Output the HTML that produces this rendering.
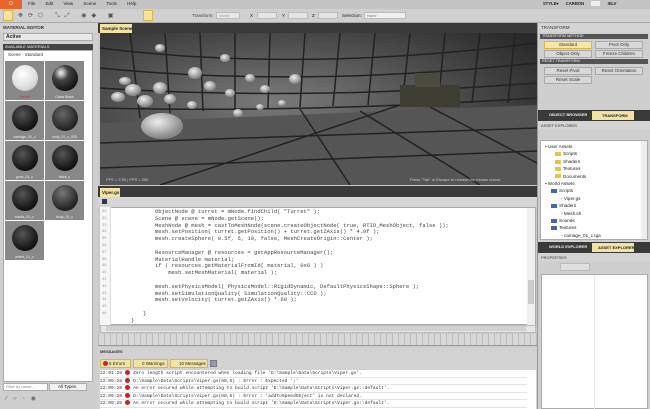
<!DOCTYPE html>
<html><head><style>
*{margin:0;padding:0;box-sizing:border-box}
body{width:650px;height:409px;overflow:hidden;background:#c9c9c9;font-family:"Liberation Sans",sans-serif;font-size:5px;color:#222;position:relative}
.a{position:absolute;white-space:nowrap}
.hdr{background:#d4d4d4;color:#333;font-size:4.5px;font-weight:bold;padding:2px 3px}
.dark{background:#3a3a3a}
.code{font-family:"Liberation Mono",monospace;font-size:5.5px;line-height:6.8px;white-space:pre;color:#444}
.btn{position:absolute;background:#d8d8d8;border:1px solid #aaa;font-size:4.5px;text-align:center;line-height:6px;color:#333;white-space:nowrap}
.th{position:absolute;width:39px;height:39px;background:#888;}
.th i{position:absolute;left:7px;top:4px;width:26px;height:26px;border-radius:50%;background:radial-gradient(circle at 40% 35%,#555,#111 70%)}
.th b{position:absolute;bottom:1px;left:0;right:0;font-size:3.5px;color:#eee;text-align:center;font-weight:normal}
.msg{position:absolute;left:100px;width:427px;height:7.5px;font-family:"Liberation Mono",monospace;font-size:4.6px;line-height:7.5px;white-space:pre;color:#333;border-bottom:1px solid #e4e4e4;overflow:hidden}
.msg span{display:inline-block;width:5px;height:5px;border-radius:50%;background:#c22;vertical-align:middle;margin:0 3px}
.tree{position:absolute;font-size:4.6px;color:#222}
.tree i{display:inline-block;width:6px;height:4px;background:#e8c24a;margin-right:2px;vertical-align:middle}
</style></head><body>
<div class="a" style="left:0;top:0;width:650px;height:9px;background:#c4c4c4"></div>
<div class="a" style="left:0;top:0;width:22px;height:9px;background:#e8652a;color:#fff;text-align:center;font-size:5px;line-height:9px">O</div>
<div class="a" style="left:28px;top:1px;font-size:4.5px;word-spacing:9px">File Edit View Scene Tools Help</div>
<div class="a" style="left:543px;top:1px;font-size:4.2px;font-weight:bold;word-spacing:6px">STYLE▾ CARBON <span style="background:#eee;color:#eee">SILV</span> SILV</div>
<div class="a" style="left:0;top:9px;width:650px;height:14px;background:#d0d0d0;border-bottom:1px solid #aaa"></div>
<div class="a" style="left:3px;top:10px;width:10px;height:11px;background:#f3e3a0;border:1px solid #d9b74c"></div>
<div class="a" style="left:143px;top:10px;width:10px;height:11px;background:#f3e3a0;border:1px solid #d9b74c"></div>
<div class="a" style="left:18px;top:12px;width:120px;height:7px;color:#555;font-size:6px;letter-spacing:5px">✥⟳⬡ ⤡⤢ ◉◆ ▣</div>
<div class="a" style="left:192px;top:13px;font-size:4.5px;color:#444">Transform:</div>
<div class="a" style="left:216px;top:12px;width:24px;height:7px;background:#e8e8e8;border:1px solid #bbb;font-size:4px;color:#999;padding-left:2px">World</div>
<div class="a" style="left:250px;top:13px;font-size:4.5px">X</div><div class="a" style="left:257px;top:12px;width:20px;height:7px;background:#e4e4e4;border:1px solid #bbb"></div>
<div class="a" style="left:282px;top:13px;font-size:4.5px">Y</div><div class="a" style="left:288px;top:12px;width:20px;height:7px;background:#e4e4e4;border:1px solid #bbb"></div>
<div class="a" style="left:312px;top:13px;font-size:4.5px">Z</div><div class="a" style="left:318px;top:12px;width:20px;height:7px;background:#e4e4e4;border:1px solid #bbb"></div>
<div class="a" style="left:342px;top:13px;font-size:4.5px">Selection:</div>
<div class="a" style="left:364px;top:12px;width:42px;height:7px;background:#f0f0f0;border:1px solid #bbb;font-size:4px;color:#777;padding-left:2px">None</div>
<div class="a" style="left:0;top:23px;width:98px;height:386px;background:#cfcfcf"></div>
<div class="a hdr" style="left:0;top:23px;width:97px;height:9px">MATERIAL EDITOR</div>
<div class="a" style="left:3px;top:33px;width:90px;height:8px;background:#e8e8e8;border:1px solid #aaa;font-size:5px;padding-left:2px;font-weight:bold">Active</div>
<div class="a" style="left:3px;top:44px;width:90px;height:6px;background:#444;color:#eee;font-size:4px;padding-left:2px;line-height:6px">AVAILABLE MATERIALS</div>
<div class="a" style="left:3px;top:50px;width:90px;height:332px;background:#fff;border:1px solid #aaa"></div>
<div class="a" style="left:8px;top:52px;font-size:4.5px;color:#333">Scene - Standard</div>
<div class="th" style="left:5px;top:61px"><i style="background:radial-gradient(circle at 40% 35%,#fff,#ddd 60%,#aaa)"></i><b style="color:#c33">Default</b></div>
<div class="th" style="left:45px;top:61px"><i style="background:radial-gradient(circle at 35% 30%,#ddd 5%,#444 30%,#111 75%)"></i><b>Glass Black</b></div>
<div class="th" style="left:5px;top:101px"><i></i><b>carriage_01_c</b></div>
<div class="th" style="left:45px;top:101px"><i style="background:radial-gradient(circle at 40% 35%,#666,#222 70%)"></i><b>body_01_c_000</b></div>
<div class="th" style="left:5px;top:141px"><i></i><b>guns_01_c</b></div>
<div class="th" style="left:45px;top:141px"><i></i><b>track_c</b></div>
<div class="th" style="left:5px;top:181px"><i></i><b>tracks_01_c</b></div>
<div class="th" style="left:45px;top:181px"><i style="background:radial-gradient(circle at 40% 30%,#777,#222 70%)"></i><b>body_02_c</b></div>
<div class="th" style="left:5px;top:221px"><i></i><b>wheel_01_c</b></div>
<div class="a" style="left:3px;top:383px;width:45px;height:8px;background:#fff;border:1px solid #aaa;font-size:4px;color:#888;padding-left:2px">Filter by name...</div>
<div class="a" style="left:49px;top:383px;width:38px;height:8px;background:#f2f2f2;border:1px solid #aaa;font-size:4.5px;padding-left:8px">All Types</div>
<div class="a" style="left:6px;top:395px;font-size:6px;color:#666;letter-spacing:6px">⁄○◦◉</div>
<div class="a dark" style="left:98px;top:23px;width:439px;height:10px"></div>
<div class="a" style="left:100px;top:24px;width:32px;height:9px;background:#f2e3a2;font-size:4.5px;font-weight:bold;padding:2px">Sample Scene</div>
<div class="a" style="left:100px;top:33px;width:437px;height:152px;overflow:hidden;background:#444">
<svg width="437" height="152" viewBox="0 0 437 152">
<defs><radialGradient id="g" cx="0.4" cy="0.45" r="0.7"><stop offset="0" stop-color="#7a7a7a"/><stop offset="1" stop-color="#2a2a2a"/></radialGradient>
<radialGradient id="s" cx="0.4" cy="0.35" r="0.6"><stop offset="0" stop-color="#eee"/><stop offset="1" stop-color="#888"/></radialGradient></defs>
<rect width="437" height="152" fill="url(#g)"/>
<polygon points="0,90 437,72 437,152 0,152" fill="#555"/>
<g stroke="#222" stroke-width="1.5" fill="none">
<path d="M30 0 L40 85 M65 0 L70 80 M100 0 L103 78 M135 0 L135 76 M170 0 L168 75 M205 0 L200 74 M240 0 L233 73 M275 0 L268 72 M310 0 L302 72 M345 0 L338 71 M380 0 L372 70 M415 0 L408 70"/>
<path d="M0 15 Q200 40 437 10 M0 35 Q200 55 437 30 M0 55 Q200 68 437 50 M0 75 Q200 80 437 65"/>
<path d="M0 110 L437 95 M0 135 L437 118 M60 152 L300 72 M250 152 L200 76 M380 152 L260 78 M437 130 L330 74"/>
</g>
<g fill="url(#s)">
<ellipse cx="62" cy="93" rx="21" ry="13"/><ellipse cx="33" cy="57" rx="8" ry="6"/><ellipse cx="60" cy="55" rx="7" ry="6"/><ellipse cx="18" cy="64" rx="7" ry="5"/>
<ellipse cx="45" cy="68" rx="8" ry="6"/><ellipse cx="70" cy="66" rx="6" ry="5"/><ellipse cx="95" cy="40" rx="7" ry="6"/><ellipse cx="110" cy="53" rx="6" ry="5"/>
<ellipse cx="130" cy="60" rx="5" ry="4"/><ellipse cx="150" cy="45" rx="5" ry="4"/><ellipse cx="165" cy="56" rx="5" ry="4"/><ellipse cx="195" cy="46" rx="6" ry="5"/>
<ellipse cx="160" cy="74" rx="4" ry="3"/><ellipse cx="182" cy="70" rx="4" ry="3"/><ellipse cx="92" cy="72" rx="5" ry="4"/><ellipse cx="125" cy="25" rx="5" ry="4"/><ellipse cx="60" cy="15" rx="5" ry="4"/>
<ellipse cx="25" cy="48" rx="6" ry="4"/><ellipse cx="138" cy="80" rx="5" ry="4"/>
</g>
<rect x="300" y="52" width="60" height="22" fill="#3d3d33"/><rect x="315" y="40" width="25" height="14" fill="#4a4a3e"/>
<text x="6" y="148" font-size="4" fill="#ccc" font-family="Liberation Sans">FPS = 2.50 | FPS = 260</text>
<text x="310" y="148" font-size="4" fill="#ccc" font-family="Liberation Sans">Press "Tab" or Escape to release the mouse cursor</text>
</svg></div>
<div class="a dark" style="left:98px;top:186px;width:439px;height:11px"></div>
<div class="a" style="left:100px;top:188px;width:20px;height:9px;background:#f2e3a2;font-size:4.5px;font-weight:bold;padding:2px">Viper.gs</div>
<div class="a" style="left:98px;top:197px;width:439px;height:10px;background:#d6d6d6"></div>
<div class="a" style="left:102px;top:199px;width:5px;height:5px;background:#335;"></div>
<div class="a" style="left:100px;top:207px;width:436px;height:118px;background:#fff;border:1px solid #aaa"></div>
<div class="a" style="left:100px;top:207px;width:11px;height:118px;background:#f6f6f6;border-right:1px solid #ddd"></div>
<div class="a code" style="left:102px;top:209px;font-size:3.8px;color:#999">31
32
33
34
35
36
37
38
39
40
41
42
43
44
45
46</div>
<div class="a code" style="left:155px;top:209px">ObjectNode @ turret = mNode.findChild( "Turret" );
Scene @ scene = mNode.getScene();
MeshNode @ mesh = castToMeshNode(scene.createObjectNode( true, RTID_MeshObject, false ));
mesh.setPosition( turret.getPosition() + turret.getZAxis() * 4.0f );
mesh.createSphere( 0.5f, 5, 10, false, MeshCreateOrigin::Center );

ResourceManager @ resources = getAppResourceManager();
MaterialHandle material;
if ( resources.getMaterialFromId( material, 0x6 ) )
    mesh.setMeshMaterial( material );

mesh.setPhysicsModel( PhysicsModel::RigidDynamic, DefaultPhysicsShape::Sphere );
mesh.setSimulationQuality( SimulationQuality::CCD );
mesh.setVelocity( turret.getZAxis() * 60 );</div>
<div class="a code" style="left:143px;top:311px">}</div>
<div class="a code" style="left:131px;top:318px">}</div>
<div class="a" style="left:527px;top:208px;width:8px;height:117px;background:#eee"></div>
<div class="a" style="left:528px;top:280px;width:6px;height:24px;background:#ccc"></div>
<div class="a" style="left:100px;top:325px;width:436px;height:8px;background:#e6e6e6;border:1px solid #bbb"></div>
<div class="a" style="left:106px;top:326px;width:420px;height:5px;background:#d0d0d0"></div>
<div class="a" style="left:98px;top:334px;width:439px;height:12px;background:repeating-linear-gradient(90deg,#bbb 0 1px,#d8d8d8 1px 6px);border-bottom:1px solid #999"></div>
<div class="a" style="left:98px;top:347px;width:439px;height:62px;background:#d2d2d2"></div>
<div class="a" style="left:100px;top:349px;font-size:4px;font-weight:bold;color:#333">MESSAGES</div>
<div class="a" style="left:100px;top:359px;width:31px;height:9px;background:#f2e3a2;border:1px solid #d9b74c;font-size:4.5px;line-height:7px;padding-left:8px">5 Errors</div>
<div class="a" style="left:133px;top:359px;width:35px;height:9px;background:#f2e3a2;border:1px solid #d9b74c;font-size:4.5px;line-height:7px;padding-left:8px">0 Warnings</div>
<div class="a" style="left:170px;top:359px;width:38px;height:9px;background:#f2e3a2;border:1px solid #d9b74c;font-size:4.5px;line-height:7px;padding-left:8px">10 Messages</div>
<div class="a" style="left:103px;top:361px;width:5px;height:5px;border-radius:50%;background:#c22"></div>
<div class="a" style="left:210px;top:360px;width:7px;height:7px;background:#99a;border:1px solid #778"></div>
<div class="a" style="left:100px;top:370px;width:436px;height:39px;background:#fff"></div>
<div class="msg" style="top:370px">22:01:28<span></span>Zero length script encountered when loading file 'D:\Sample\Data\Scripts\Viper.gs'.</div>
<div class="msg" style="top:377.5px">22:09:28<span></span>D:\Sample\Data\Scripts\Viper.gs(50,5) : Error : Expected ';'</div>
<div class="msg" style="top:385px">22:09:28<span></span>An error occured while attempting to build script 'D:\Sample\Data\Scripts\Viper.gs::default'.</div>
<div class="msg" style="top:392.5px">22:09:28<span></span>D:\Sample\Data\Scripts\Viper.gs(50,5) : Error : 'addToSpeedObject' is not declared.</div>
<div class="msg" style="top:400px">22:09:28<span></span>An error occured while attempting to build script 'D:\Sample\Data\Scripts\Viper.gs::default'.</div>
<div class="a" style="left:537px;top:23px;width:113px;height:386px;background:#cfcfcf;border-left:1px solid #999"></div>
<div class="a hdr" style="left:538px;top:23px;width:112px;height:9px;font-weight:normal">TRANSFORM</div>
<div class="a" style="left:540px;top:34px;width:108px;height:5px;background:#555;color:#eee;font-size:3.8px;padding-left:2px;line-height:5px">TRANSFORM METHOD</div>
<div class="btn" style="left:544px;top:41px;width:48px;height:8px;background:#f5e6a8;border-color:#d9b74c">Standard</div>
<div class="btn" style="left:595px;top:41px;width:48px;height:8px">Pivot Only</div>
<div class="btn" style="left:544px;top:50px;width:48px;height:8px">Object Only</div>
<div class="btn" style="left:595px;top:50px;width:48px;height:8px">Freeze Children</div>
<div class="a" style="left:540px;top:59px;width:108px;height:5px;background:#555;color:#eee;font-size:3.8px;padding-left:2px;line-height:5px">RESET TRANSFORM</div>
<div class="btn" style="left:544px;top:67px;width:48px;height:8px">Reset Pivot</div>
<div class="btn" style="left:595px;top:67px;width:48px;height:8px">Reset Orientation</div>
<div class="btn" style="left:544px;top:76px;width:48px;height:8px">Reset Scale</div>
<div class="a dark" style="left:538px;top:110px;width:112px;height:11px"></div>
<div class="a" style="left:549px;top:112px;font-size:4px;color:#eee;font-weight:bold">OBJECT BROWSER</div>
<div class="a" style="left:592px;top:111px;width:42px;height:9px;background:#f2e3a2;font-size:4px;font-weight:bold;padding:2px 0 0 10px">TRANSFORM</div>
<div class="a hdr" style="left:538px;top:121px;width:112px;height:8px;font-weight:normal;font-size:4px">ASSET EXPLORER</div>
<div class="a" style="left:540px;top:140px;width:108px;height:100px;background:#fff;border:1px solid #aaa"></div>
<div class="a" style="left:641px;top:141px;width:6px;height:98px;background:#eee"></div>
<div class="tree" style="left:545px;top:143px;line-height:7.4px">
<div>▪ User Assets</div><div style="padding-left:10px"><i></i>Scripts</div><div style="padding-left:10px"><i></i>Shaders</div><div style="padding-left:10px"><i></i>Textures</div><div style="padding-left:10px"><i></i>Documents</div>
<div>▪ World Assets</div><div style="padding-left:6px"><i style="background:#46a"></i>Scripts</div><div style="padding-left:16px">▫ Viper.gs</div><div style="padding-left:6px"><i style="background:#46a"></i>Shaders</div><div style="padding-left:16px">▫ Mesh.sh</div><div style="padding-left:6px"><i style="background:#46a"></i>Sounds</div><div style="padding-left:6px"><i style="background:#46a"></i>Textures</div><div style="padding-left:16px">▫ carriage_01_c.tga</div></div>
<div class="a dark" style="left:538px;top:242px;width:112px;height:11px"></div>
<div class="a" style="left:549px;top:244px;font-size:4px;color:#eee;font-weight:bold">WORLD EXPLORER</div>
<div class="a" style="left:592px;top:243px;width:42px;height:9px;background:#f2e3a2;font-size:4px;font-weight:bold;padding:2px 0 0 6px">ASSET EXPLORER</div>
<div class="a hdr" style="left:538px;top:253px;width:112px;height:8px;font-weight:normal;font-size:4px">PROPERTIES</div>
<div class="a" style="left:560px;top:263px;width:30px;height:8px;background:#e0e0e0;border:1px solid #bbb"></div>
<div class="a" style="left:541px;top:274px;width:107px;height:135px;background:#fff;border:1px solid #aaa"></div>
<div class="a" style="left:594px;top:275px;width:1px;height:134px;background:#e4e4e4"></div>
</body></html>
